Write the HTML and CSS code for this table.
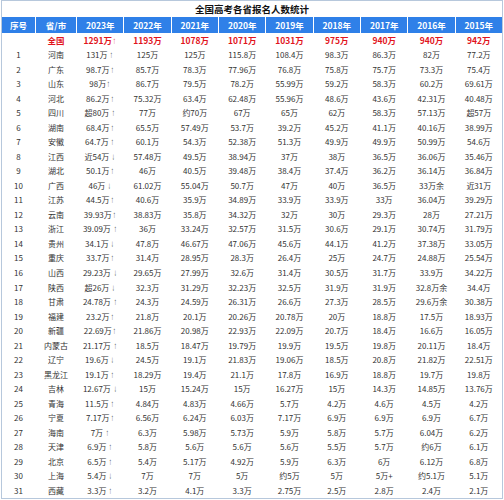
FILE: index.html
```html
<!DOCTYPE html>
<html lang="zh-CN">
<head>
<meta charset="utf-8">
<title>全国高考各省报名人数统计</title>
<link rel="stylesheet" href="styles.css">
</head>
<body>
<div class="sheet">
  <div class="title">全国高考各省报名人数统计</div>
  <div class="grid">
    <div class="th">序号</div><div class="th">省/市</div><div class="th">2023年</div><div class="th">2022年</div><div class="th">2021年</div><div class="th">2020年</div><div class="th">2019年</div><div class="th">2018年</div><div class="th">2017年</div><div class="th">2016年</div><div class="th">2015年</div>

    <div class="td total"></div><div class="td total">全国</div><div class="td total">1291万<span class="arr">↑</span></div><div class="td total">1193万</div><div class="td total">1078万</div><div class="td total">1071万</div><div class="td total">1031万</div><div class="td total">975万</div><div class="td total">940万</div><div class="td total">940万</div><div class="td total">942万</div>

    <div class="td">1</div><div class="td">河南</div><div class="td">131万&nbsp;<span class="arr">↑</span></div><div class="td">125万</div><div class="td">125万</div><div class="td">115.8万</div><div class="td">108.4万</div><div class="td">98.3万</div><div class="td">86.3万</div><div class="td">82万</div><div class="td">77.2万</div>
    <div class="td">2</div><div class="td">广东</div><div class="td">98.7万<span class="arr">↑</span></div><div class="td">85.7万</div><div class="td">78.3万</div><div class="td">77.96万</div><div class="td">76.8万</div><div class="td">75.8万</div><div class="td">75.7万</div><div class="td">73.3万</div><div class="td">75.4万</div>
    <div class="td">3</div><div class="td">山东</div><div class="td">98万<span class="arr">↑</span></div><div class="td">86.7万</div><div class="td">79.5万</div><div class="td">78.2万</div><div class="td">55.99万</div><div class="td">59.2万</div><div class="td">58.3万</div><div class="td">60.2万</div><div class="td">69.61万</div>
    <div class="td">4</div><div class="td">河北</div><div class="td">86.2万<span class="arr">↑</span></div><div class="td">75.32万</div><div class="td">63.4万</div><div class="td">62.48万</div><div class="td">55.96万</div><div class="td">48.6万</div><div class="td">43.6万</div><div class="td">42.31万</div><div class="td">40.48万</div>
    <div class="td">5</div><div class="td">四川</div><div class="td">超80万&nbsp;<span class="arr">↑</span></div><div class="td">77万</div><div class="td">约70万</div><div class="td">67万</div><div class="td">65万</div><div class="td">62万</div><div class="td">58.3万</div><div class="td">57.13万</div><div class="td">超57万</div>
    <div class="td">6</div><div class="td">湖南</div><div class="td">68.4万<span class="arr">↑</span></div><div class="td">65.5万</div><div class="td">57.49万</div><div class="td">53.7万</div><div class="td">39.2万</div><div class="td">45.2万</div><div class="td">41.1万</div><div class="td">40.16万</div><div class="td">38.99万</div>
    <div class="td">7</div><div class="td">安徽</div><div class="td">64.7万&nbsp;<span class="arr">↑</span></div><div class="td">60.1万</div><div class="td">54.3万</div><div class="td">52.38万</div><div class="td">51.3万</div><div class="td">49.9万</div><div class="td">49.9万</div><div class="td">50.99万</div><div class="td">54.6万</div>
    <div class="td">8</div><div class="td">江西</div><div class="td">近54万&nbsp;<span class="arr">↓</span></div><div class="td">57.48万</div><div class="td">49.5万</div><div class="td">38.94万</div><div class="td">37万</div><div class="td">38万</div><div class="td">36.5万</div><div class="td">36.06万</div><div class="td">35.46万</div>
    <div class="td">9</div><div class="td">湖北</div><div class="td">50.1万<span class="arr">↑</span></div><div class="td">46万</div><div class="td">40.5万</div><div class="td">39.48万</div><div class="td">38.4万</div><div class="td">37.4万</div><div class="td">36.2万</div><div class="td">36.14万</div><div class="td">36.84万</div>
    <div class="td">10</div><div class="td">广西</div><div class="td">46万&nbsp;<span class="arr">↓</span></div><div class="td">61.02万</div><div class="td">55.04万</div><div class="td">50.7万</div><div class="td">47万</div><div class="td">40万</div><div class="td">36.5万</div><div class="td">33万余</div><div class="td">近31万</div>
    <div class="td">11</div><div class="td">江苏</div><div class="td">44.5万<span class="arr">↑</span></div><div class="td">40.6万</div><div class="td">35.9万</div><div class="td">34.89万</div><div class="td">33.9万</div><div class="td">33.9万</div><div class="td">33万</div><div class="td">36.04万</div><div class="td">39.29万</div>
    <div class="td">12</div><div class="td">云南</div><div class="td">39.93万<span class="arr">↑</span></div><div class="td">38.83万</div><div class="td">35.8万</div><div class="td">34.32万</div><div class="td">32万</div><div class="td">30万</div><div class="td">29.3万</div><div class="td">28万</div><div class="td">27.21万</div>
    <div class="td">13</div><div class="td">浙江</div><div class="td">39.09万&nbsp;<span class="arr">↑</span></div><div class="td">36万</div><div class="td">33.24万</div><div class="td">32.57万</div><div class="td">31.5万</div><div class="td">30.6万</div><div class="td">29.1万</div><div class="td">30.74万</div><div class="td">31.79万</div>
    <div class="td">14</div><div class="td">贵州</div><div class="td">34.1万&nbsp;<span class="arr">↓</span></div><div class="td">47.8万</div><div class="td">46.67万</div><div class="td">47.06万</div><div class="td">45.6万</div><div class="td">44.1万</div><div class="td">41.2万</div><div class="td">37.38万</div><div class="td">33.05万</div>
    <div class="td">15</div><div class="td">重庆</div><div class="td">33.7万<span class="arr">↑</span></div><div class="td">31.4万</div><div class="td">28.95万</div><div class="td">28.3万</div><div class="td">26.4万</div><div class="td">25万</div><div class="td">24.7万</div><div class="td">24.88万</div><div class="td">25.54万</div>
    <div class="td">16</div><div class="td">山西</div><div class="td">29.23万&nbsp;<span class="arr">↓</span></div><div class="td">29.65万</div><div class="td">27.99万</div><div class="td">32.6万</div><div class="td">31.4万</div><div class="td">30.5万</div><div class="td">31.7万</div><div class="td">33.9万</div><div class="td">34.22万</div>
    <div class="td">17</div><div class="td">陕西</div><div class="td">超26万&nbsp;<span class="arr">↓</span></div><div class="td">32.3万</div><div class="td">31.29万</div><div class="td">32.23万</div><div class="td">32.5万</div><div class="td">31.9万</div><div class="td">31.9万</div><div class="td">32.8万余</div><div class="td">34.4万</div>
    <div class="td">18</div><div class="td">甘肃</div><div class="td">24.78万&nbsp;<span class="arr">↑</span></div><div class="td">24.3万</div><div class="td">24.59万</div><div class="td">26.31万</div><div class="td">26.6万</div><div class="td">27.3万</div><div class="td">28.5万</div><div class="td">29.6万余</div><div class="td">30.38万</div>
    <div class="td">19</div><div class="td">福建</div><div class="td">23.2万<span class="arr">↑</span></div><div class="td">21.8万</div><div class="td">20.1万</div><div class="td">20.26万</div><div class="td">20.78万</div><div class="td">20万</div><div class="td">18.8万</div><div class="td">17.5万</div><div class="td">18.93万</div>
    <div class="td">20</div><div class="td">新疆</div><div class="td">22.69万<span class="arr">↑</span></div><div class="td">21.86万</div><div class="td">20.98万</div><div class="td">22.93万</div><div class="td">22.09万</div><div class="td">20.7万</div><div class="td">18.4万</div><div class="td">16.6万</div><div class="td">16.05万</div>
    <div class="td">21</div><div class="td">内蒙古</div><div class="td">21.17万&nbsp;<span class="arr">↑</span></div><div class="td">18.5万</div><div class="td">18.47万</div><div class="td">19.79万</div><div class="td">19.9万</div><div class="td">19.5万</div><div class="td">19.8万</div><div class="td">20.11万</div><div class="td">18.4万</div>
    <div class="td">22</div><div class="td">辽宁</div><div class="td">19.6万&nbsp;<span class="arr">↓</span></div><div class="td">24.5万</div><div class="td">19.1万</div><div class="td">21.83万</div><div class="td">19.06万</div><div class="td">18.5万</div><div class="td">20.8万</div><div class="td">21.82万</div><div class="td">22.51万</div>
    <div class="td">23</div><div class="td">黑龙江</div><div class="td">19.1万&nbsp;<span class="arr">↑</span></div><div class="td">18.29万</div><div class="td">19.4万</div><div class="td">21.1万</div><div class="td">17.8万</div><div class="td">16.9万</div><div class="td">18.8万</div><div class="td">19.7万</div><div class="td">19.8万</div>
    <div class="td">24</div><div class="td">吉林</div><div class="td">12.67万&nbsp;<span class="arr">↓</span></div><div class="td">15万</div><div class="td">15.24万</div><div class="td">15万</div><div class="td">16.27万</div><div class="td">15万</div><div class="td">14.3万</div><div class="td">14.85万</div><div class="td">13.76万</div>
    <div class="td">25</div><div class="td">青海</div><div class="td">11.5万&nbsp;<span class="arr">↑</span></div><div class="td">4.84万</div><div class="td">4.83万</div><div class="td">4.66万</div><div class="td">5.7万</div><div class="td">4.2万</div><div class="td">4.6万</div><div class="td">4.5万</div><div class="td">4.2万</div>
    <div class="td">26</div><div class="td">宁夏</div><div class="td">7.17万<span class="arr">↑</span></div><div class="td">6.56万</div><div class="td">6.24万</div><div class="td">6.03万</div><div class="td">7.17万</div><div class="td">6.9万</div><div class="td">6.9万</div><div class="td">6.9万</div><div class="td">6.7万</div>
    <div class="td">27</div><div class="td">海南</div><div class="td">7万&nbsp;<span class="arr">↑</span></div><div class="td">6.3万</div><div class="td">5.98万</div><div class="td">5.73万</div><div class="td">5.9万</div><div class="td">5.8万</div><div class="td">5.7万</div><div class="td">6.04万</div><div class="td">6.2万</div>
    <div class="td">28</div><div class="td">天津</div><div class="td">6.9万&nbsp;<span class="arr">↑</span></div><div class="td">5.8万</div><div class="td">5.6万</div><div class="td">5.6万</div><div class="td">5.6万</div><div class="td">5.5万</div><div class="td">5.7万</div><div class="td">约6万</div><div class="td">6.1万</div>
    <div class="td">29</div><div class="td">北京</div><div class="td">6.5万&nbsp;<span class="arr">↑</span></div><div class="td">5.4万</div><div class="td">5.17万</div><div class="td">4.92万</div><div class="td">5.9万</div><div class="td">6.3万</div><div class="td">6万</div><div class="td">6.12万</div><div class="td">6.8万</div>
    <div class="td">30</div><div class="td">上海</div><div class="td">5.4万&nbsp;<span class="arr">↓</span></div><div class="td">7万</div><div class="td">7万</div><div class="td">5万</div><div class="td">约5万</div><div class="td">5万</div><div class="td">5万+</div><div class="td">约5.1万</div><div class="td">5.1万</div>
    <div class="td">31</div><div class="td">西藏</div><div class="td">3.3万&nbsp;<span class="arr">↑</span></div><div class="td">3.2万</div><div class="td">4.1万</div><div class="td">3.3万</div><div class="td">2.75万</div><div class="td">2.5万</div><div class="td">2.8万</div><div class="td">2.4万</div><div class="td">2.1万</div>
  </div>
</div>
</body>
</html>
```

FILE: styles.css
```css
html, body {
  margin: 0;
  padding: 0;
  background: #ffffff;
}

body {
  font-family: "Noto Sans CJK SC", "Noto Sans", sans-serif;
  color: #333333;
}

.sheet {
  margin: 0 1px 0 1px;
  border: 1px solid #b7c8dc;
  background: #ffffff;
}

.title {
  height: 16px;
  line-height: 16px;
  text-align: center;
  font-size: 9.5px;
  font-weight: 700;
  color: #111111;
}

.grid {
  display: grid;
  grid-template-columns: 33px 40px repeat(9, 1fr);
  grid-template-rows: 16px;
  grid-auto-rows: 14.53px;
  column-gap: 1px;
}

.th,
.td {
  display: flex;
  align-items: center;
  justify-content: center;
  white-space: nowrap;
  overflow: hidden;
}

.th {
  background: #2f80e8;
  color: #ffffff;
  font-size: 8.5px;
  font-weight: 700;
}

.td {
  font-size: 8px;
  color: #333333;
}

.td.total {
  color: #e1141c;
  font-weight: 700;
  font-size: 8.5px;
}

.arr {
  font-family: "Liberation Sans", "DejaVu Sans", sans-serif;
  font-size: 9.5px;
  font-weight: 400;
  display: inline-block;
  transform: scaleX(0.55);
  margin-left: 0;
}
```
